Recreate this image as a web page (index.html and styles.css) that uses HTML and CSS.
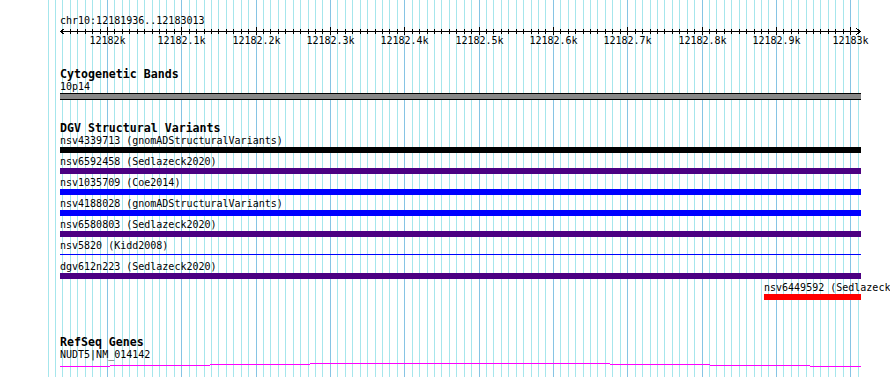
FILE: index.html
```html
<!DOCTYPE html>
<html lang="en">
<head>
  <meta charset="UTF-8" />
  <title>chr10:12181936..12183013</title>
  <link rel="stylesheet" href="styles.css">
</head>
<body>
  <div class="view">
    <svg class="grid" id="grid" width="890" height="377"></svg>

    <div class="overview">
      <div class="locus">chr10:12181936..12183013</div>
      <svg class="ruler" id="ruler" width="890" height="22"></svg>
    </div>

    <section class="track track-cyto">
      <h2 class="track-label">Cytogenetic Bands</h2>
      <div class="feature">
        <div class="feature-name">10p14</div>
        <div class="bar band"></div>
      </div>
    </section>

    <section class="track track-dgv">
      <h2 class="track-label">DGV Structural Variants</h2>
      <div class="feature">
        <div class="feature-name">nsv4339713 (gnomADStructuralVariants)</div>
        <div class="bar black"></div>
      </div>
      <div class="feature">
        <div class="feature-name">nsv6592458 (Sedlazeck2020)</div>
        <div class="bar indigo"></div>
      </div>
      <div class="feature">
        <div class="feature-name">nsv1035709 (Coe2014)</div>
        <div class="bar blue"></div>
      </div>
      <div class="feature">
        <div class="feature-name">nsv4188028 (gnomADStructuralVariants)</div>
        <div class="bar blue"></div>
      </div>
      <div class="feature">
        <div class="feature-name">nsv6580803 (Sedlazeck2020)</div>
        <div class="bar indigo"></div>
      </div>
      <div class="feature">
        <div class="feature-name">nsv5820 (Kidd2008)</div>
        <div class="bar thin-blue"></div>
      </div>
      <div class="feature">
        <div class="feature-name">dgv612n223 (Sedlazeck2020)</div>
        <div class="bar indigo"></div>
      </div>
      <div class="feature feature-right">
        <div class="feature-name">nsv6449592 (Sedlazeck2020)</div>
        <div class="bar red"></div>
      </div>
    </section>

    <section class="track track-genes">
      <h2 class="track-label">RefSeq Genes</h2>
      <div class="feature">
        <div class="feature-name">NUDT5|NM_014142</div>
        <svg class="gene" width="801" height="7">
          <path d="M0 5.5 H50 M50 4.5 H150 M150 3.5 H250 M250 2.5 H550 M550 3.5 H650 M650 4.5 H750 M750 5.5 H801" />
        </svg>
      </div>
    </section>
  </div>

  <script>
    const NS = "http://www.w3.org/2000/svg";
    const startBp = 12181936;
    const scale = 0.7432;
    const originX = 59.9;

    const toX = (bp) => originX + (bp - startBp) * scale;

    function line(svg, x1, y1, x2, y2, cls) {
      const el = document.createElementNS(NS, "line");
      el.setAttribute("x1", x1);
      el.setAttribute("y1", y1);
      el.setAttribute("x2", x2);
      el.setAttribute("y2", y2);
      if (cls) el.setAttribute("class", cls);
      svg.appendChild(el);
    }

    // background grid, one line every 10bp
    const grid = document.getElementById("grid");
    for (let bp = 12181920; bp <= 12183010; bp += 10) {
      const x = Math.floor(toX(bp)) + 0.5;
      line(grid, x, 0, x, 377, bp % 100 === 0 ? "major" : "minor");
    }

    // scale bar
    const ruler = document.getElementById("ruler");
    line(ruler, 60, 4.5, 861, 4.5);
    const arrows = document.createElementNS(NS, "path");
    arrows.setAttribute("d", "M64.5 1.5 L60.5 4.5 L64.5 7.5 M856.5 1.5 L860.5 4.5 L856.5 7.5");
    ruler.appendChild(arrows);

    for (let bp = 12181940; bp <= 12183000; bp += 10) {
      const x = Math.floor(toX(bp)) + 0.5;
      const major = bp % 100 === 0;
      line(ruler, x, major ? 0 : 2, x, major ? 8 : 7);
      if (major) {
        const label = document.createElementNS(NS, "text");
        label.setAttribute("x", x);
        label.setAttribute("y", 17);
        label.textContent = (bp / 1000).toFixed(1).replace(/\.0$/, "") + "k";
        ruler.appendChild(label);
      }
    }
  </script>
</body>
</html>
```

FILE: styles.css
```css
:root {
  --grid-minor: #a6e6ec;
  --grid-major: #86c4e4;
  --indigo: #4b0082;
}

html,
body {
  margin: 0;
  overflow: hidden;
  background: #fff;
}

body {
  font-family: "DejaVu Sans Mono", "Liberation Mono", monospace;
  font-size: 10px;
  color: #000;
}

.view {
  position: relative;
  z-index: 0;
  width: 890px;
  height: 377px;
  padding-top: 15px;
  box-sizing: border-box;
}

.grid {
  position: absolute;
  top: 0;
  left: 0;
  z-index: -1;
}

.grid line {
  stroke-width: 1;
  shape-rendering: crispEdges;
}

.grid .minor {
  stroke: var(--grid-minor);
}

.grid .major {
  stroke: var(--grid-major);
}

.locus {
  padding-left: 60px;
  line-height: 12px;
}

.ruler {
  display: block;
  overflow: visible;
}

.ruler line,
.ruler path {
  stroke: #000;
  stroke-width: 1;
  fill: none;
  shape-rendering: crispEdges;
}

.ruler text {
  font-family: "DejaVu Sans Mono", "Liberation Mono", monospace;
  font-size: 10px;
  text-anchor: middle;
  fill: #000;
}

.track {
  margin-left: 60px;
  width: 801px;
}

/* the last row's 3px margin collapses into these */
.track-cyto {
  margin-top: 19px;
}

.track-dgv {
  margin-top: 22px;
}

.track-genes {
  margin-top: 36px;
}

.track-label {
  margin: 0;
  font-size: 11.6px;
  font-weight: bold;
  line-height: 13px;
}

.feature {
  margin-bottom: 3px;
}

.feature-name {
  line-height: 12px;
  white-space: nowrap;
}

.feature-right {
  margin-left: 704px;
  width: 97px;
}

.bar {
  height: 6px;
}

.bar.band {
  height: 7px;
  box-sizing: border-box;
  background: #888;
  border-top: 1px solid #000;
  border-bottom: 1px solid #000;
}

.bar.black {
  background: #000;
}

.bar.indigo {
  background: var(--indigo);
}

.bar.blue {
  background: #00f;
}

.bar.thin-blue {
  background: linear-gradient(#00f, #00f) 0 2px / 100% 1px no-repeat;
}

.bar.red {
  background: #f00;
}

.gene {
  display: block;
}

.gene path {
  stroke: #f0f;
  stroke-width: 1;
  fill: none;
  shape-rendering: crispEdges;
}
```
